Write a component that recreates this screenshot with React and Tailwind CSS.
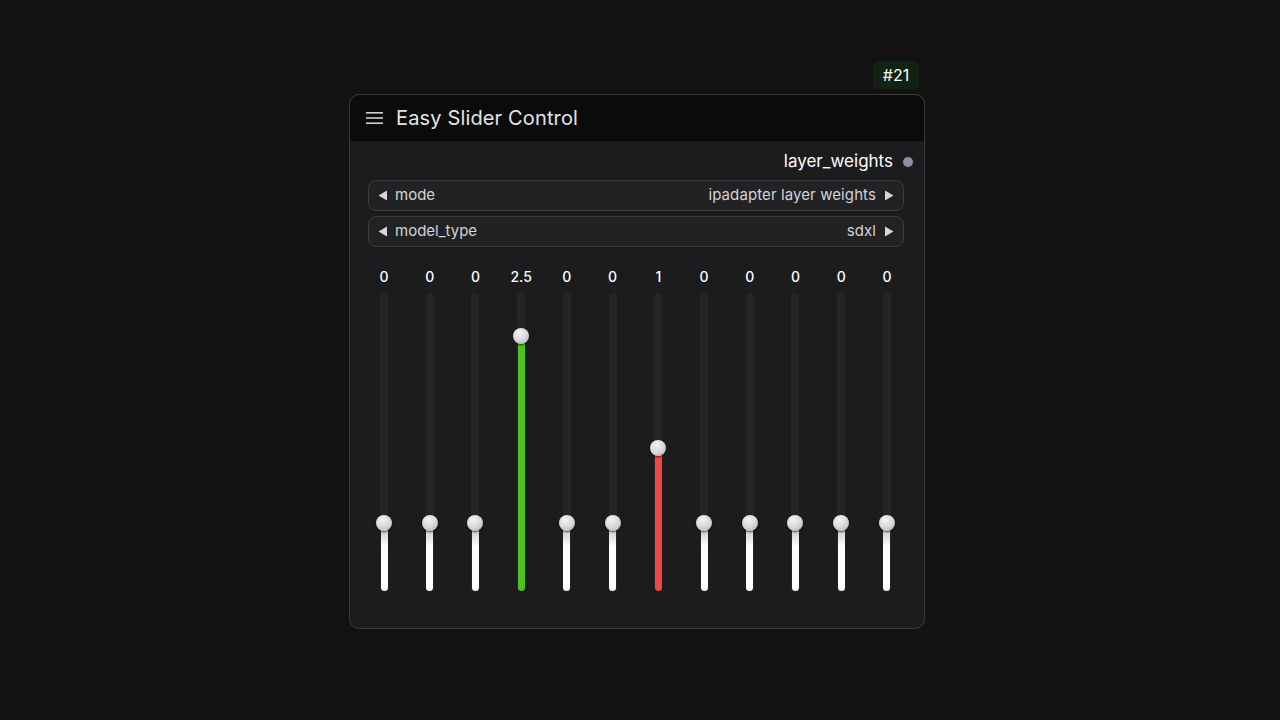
import React from 'react';

const values = [0, 0, 0, 2.5, 0, 0, 1, 0, 0, 0, 0, 0];

// thumb centre sits 68px above track bottom at 0, 74.8px per unit
const fillHeight = (v) => 68 + v * 74.8;

const fillColor = (v) => {
  if (v > 1.5) return 'bg-[#4cc21c]';
  if (v > 0) return 'bg-[#ef4646]';
  return 'bg-[linear-gradient(to_bottom,#b8b8bc,#ffffff_35%,#ffffff)]';
};

const Arrow = ({ dir }) => (
  <svg width="10" height="11" viewBox="0 0 10 11" className="shrink-0">
    {dir === 'left' ? (
      <polygon points="9,0.5 9,10.5 0.5,5.5" fill="#d6d6d6" />
    ) : (
      <polygon points="1,0.5 1,10.5 9.5,5.5" fill="#d6d6d6" />
    )}
  </svg>
);

const Combo = ({ label, value }) => (
  <div className="h-[31px] flex items-center px-[9px] rounded-lg border border-[#3b3b40] bg-[#222225] text-[15px] text-[#d4d4d4]">
    <Arrow dir="left" />
    <span className="ml-[7px]">{label}</span>
    <span className="ml-auto mr-[8px] tracking-[0.1px]">{value}</span>
    <Arrow dir="right" />
  </div>
);

const Slider = ({ value }) => (
  <div className="w-[30px] flex flex-col items-center">
    <span className="h-[20px] leading-[20px] text-[14px] font-medium text-white">{value}</span>
    <div className="mt-[6px] relative w-[8px] h-[298px] rounded-full bg-[#252528]">
      <div
        className={`absolute bottom-0 left-[0.5px] w-[7px] rounded-b-full ${fillColor(value)}`}
        style={{ height: fillHeight(value) }}
      />
      <div
        className="absolute left-1/2 -translate-x-1/2 -translate-y-1/2 w-[16px] h-[16px] rounded-full bg-[radial-gradient(circle_at_40%_30%,#f4f4f4,#d8d8da_50%,#a9a9ad)] shadow-[0_1px_2px_rgba(0,0,0,0.7)]"
        style={{ top: 298 - fillHeight(value) }}
      />
    </div>
  </div>
);

export default function App() {
  return (
    <div className="min-h-screen w-full bg-[#121212] font-['Inter','Liberation_Sans',sans-serif]">
      <div className="pt-[94px] pl-[349px]">
        <div className="relative w-[576px] h-[535px] rounded-[10px] border border-[#3a3a3d] bg-[#1c1c1e]">
          {/* node id badge */}
          <div className="absolute -top-[34px] right-[5px] h-[28px] w-[46px] rounded-[5px] bg-[#132313] flex items-center justify-center text-[16px] text-white">
            #21
          </div>

          {/* Header */}
          <div className="h-[46px] flex items-center pl-[16px] rounded-t-[10px] bg-[#0b0b0c]">
            <svg width="17" height="14" viewBox="0 0 17 14" className="shrink-0">
              <rect x="0" y="1" width="17" height="1.6" fill="#cfcfcf" />
              <rect x="0" y="6.2" width="17" height="1.6" fill="#cfcfcf" />
              <rect x="0" y="11.4" width="17" height="1.6" fill="#cfcfcf" />
            </svg>
            <span className="ml-[13px] text-[20px] tracking-[0.15px] text-[#e4e4e4]">Easy Slider Control</span>
          </div>

          {/* Body */}
          <div className="pl-[18px] pr-[20px] pt-[11px]">
            <div className="h-[20px] flex items-center justify-end">
              <span className="text-[17px] text-white">layer_weights</span>
              <span className="ml-[10px] mr-[-9px] w-[10px] h-[10px] rounded-full bg-[#8e8ea4]" />
            </div>
            <div className="mt-[8px] flex flex-col gap-[5px]">
              <Combo label="mode" value="ipadapter layer weights" />
              <Combo label="model_type" value="sdxl" />
            </div>
          </div>

          <div className="mt-[20px] ml-[19px] w-[533px] flex justify-between">
            {values.map((v, i) => (
              <Slider key={i} value={v} />
            ))}
          </div>
        </div>
      </div>
    </div>
  );
}
